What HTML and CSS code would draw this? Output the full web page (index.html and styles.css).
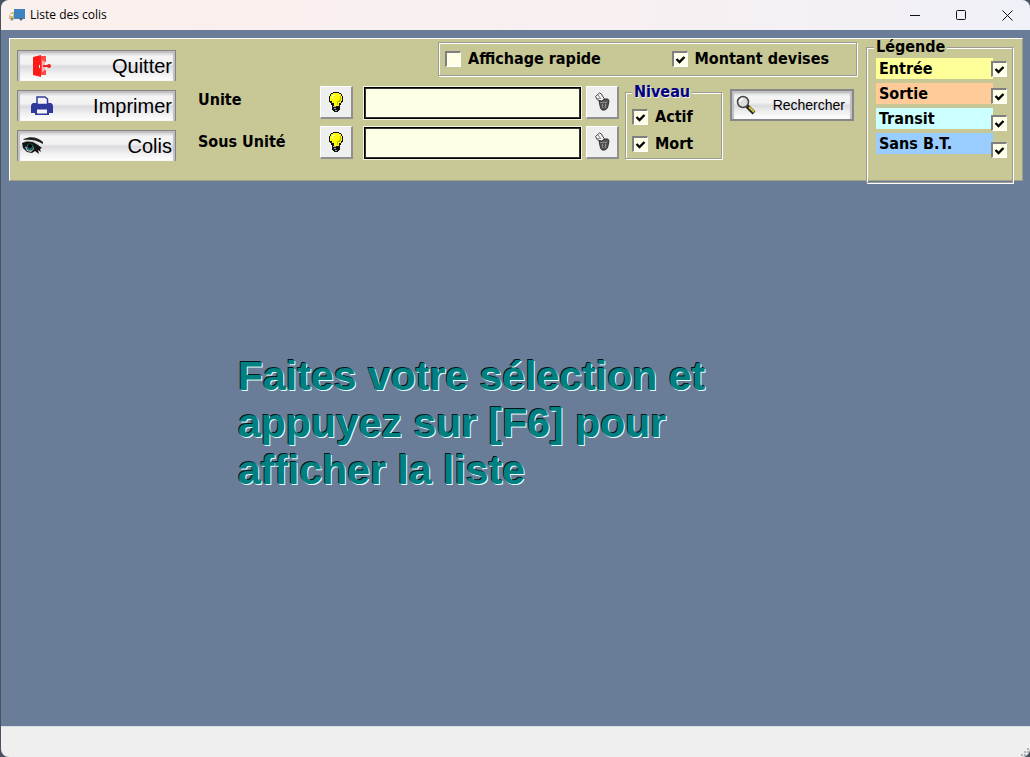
FILE: index.html
```html
<!DOCTYPE html>
<html lang="fr">
<head>
<meta charset="utf-8">
<title>Liste des colis</title>
<link rel="stylesheet" href="styles.css">
</head>
<body>
<svg class="sprites" aria-hidden="true">
  <symbol id="bulb" viewBox="0 0 16 22">
    <path d="M5 1h6v1h2v1h1v2h1v6h-1v1h-1v2h-1v5h-1v1h-1v1H6v-1H5v-1H4v-5H3v-2H2v-1H1V5h1V3h1V2h2z" fill="#111"/>
    <path d="M5 2h6v1h2v2h1v5h-1v2h-2v3H6v-3H4v-2H2V5h1V3h2z" fill="#ff0"/>
    <path d="M5 4h2v1H5v3H4V5h1z" fill="#fff"/>
    <path d="M12 5h1v5h-1v1h-2v3H9v-4h2V9h1z" fill="#b8b000"/>
    <path d="M5 15h3v1H5zM6 17h2v1H6zM7 19h2v1H7z" fill="#aaa"/>
  </symbol>
  <symbol id="trash" viewBox="0 0 16 20">
    <path d="M1.500 4.500l4-3.500 2 1 1 2 2 3-3 2-4-1z" fill="#f4f4f4" stroke="#444"/>
    <path d="M4 3l3 4M3 7l3-1" stroke="#888" fill="none"/>
    <path d="M5 8.500l3 1 3-2.500h3l1 2-1.500 7-2.500 2H8l-1.500-2z" fill="#555" stroke="#333"/>
    <path d="M6 10.500h7M8.500 12v4M11.500 12v4" stroke="#8c8c8c" fill="none"/>
  </symbol>
</svg>
<div class="window">
  <header class="titlebar">
    <svg class="app-icon" viewBox="0 0 16 14" aria-hidden="true">
      <path d="M5 1h11v10H5z" fill="#3f82bd"/>
      <path d="M1 6l2-2h2v7H0V8z" fill="#d8c07a"/><path d="M2 6h2v2H1z" fill="#eef4f8"/>
      <circle cx="3" cy="11" r="1.500" fill="#888"/><circle cx="12" cy="11" r="1.500" fill="#567"/>
    </svg>
    <h1 class="title">Liste des colis</h1>
    <button class="win-btn" aria-label="Réduire"><svg viewBox="0 0 11 11"><path d="M0 5.500h10"/></svg></button>
    <button class="win-btn" aria-label="Agrandir"><svg viewBox="0 0 11 11"><rect x=".5" y=".5" width="9" height="9" rx="1"/></svg></button>
    <button class="win-btn" aria-label="Fermer"><svg viewBox="0 0 11 11"><path d="M.5.5l10 10M10.500.5l-10 10"/></svg></button>
  </header>

  <main class="workspace">
    <form class="panel">
      <nav class="actions">
        <button type="button" class="action">
          <svg class="action-icon" viewBox="0 0 22 22" aria-hidden="true"><path d="M2 2l8-2v22l-8-2z" fill="#ff1a1a"/><path d="M10 1h5v6h-1v8h1v5h-5z" fill="#ff4a4a"/><path d="M11 5l3 2v8l-3 2z" fill="#ffb0b0"/><path d="M12 11h6" stroke="#e22" stroke-width="2"/><circle cx="18" cy="11" r="2" fill="#e22"/><path d="M8.500 10v3" stroke="#fff"/></svg>
          <span>Quitter</span>
        </button>
        <button type="button" class="action">
          <svg class="action-icon" viewBox="0 0 22 22" aria-hidden="true"><path d="M2 8h18q2 1 2 3v7h-4v2H4v-2H0v-7q0-2 2-3z" fill="#303a9c"/><path d="M6 9.500V2h8l2.500 2v5.500z" fill="#f4f4f8" stroke="#303a9c" stroke-width="1.500"/><path d="M6 14.500h10v4H6z" fill="#f4f4f8"/></svg>
          <span>Imprimer</span>
        </button>
        <button type="button" class="action action-flush">
          <svg class="action-icon" viewBox="0 0 22 22" aria-hidden="true"><path d="M2 4C8 1 16 2 21 7v2C15 5 8 4 1 5z" fill="#222"/><path d="M0 8l5-2 6 1 5 3 4 3-2 1 1 3-3-2 1 4-4-3-3 2-5-1-4-4z" fill="#151515"/><path d="M3 12l2 4 4 1 3-3-1-3z" fill="#c4cccc"/><circle cx="8" cy="12" r="3.500" fill="#1c5c60"/><circle cx="8" cy="11" r="2" fill="#000"/><path d="M2 7c4-2 10-1 15 3" stroke="#bbb" fill="none"/></svg>
          <span>Colis</span>
        </button>
      </nav>

      <section class="criteria">
        <div class="options etched">
          <label class="check"><input type="checkbox">Affichage rapide</label>
          <label class="check"><input type="checkbox" checked>Montant devises</label>
        </div>
        <div class="search-row">
          <div class="labels">
            <label for="unite">Unite</label>
            <label for="sous-unite">Sous Unité</label>
          </div>
          <div class="fields">
            <button type="button" class="tool" aria-label="Choisir l'unité"><svg class="bulb"><use href="#bulb"/></svg></button>
            <input class="field" id="unite" type="text">
            <button type="button" class="tool" aria-label="Effacer l'unité"><svg class="trash"><use href="#trash"/></svg></button>
            <button type="button" class="tool" aria-label="Choisir la sous-unité"><svg class="bulb"><use href="#bulb"/></svg></button>
            <input class="field" id="sous-unite" type="text">
            <button type="button" class="tool" aria-label="Effacer la sous-unité"><svg class="trash"><use href="#trash"/></svg></button>
          </div>
          <fieldset class="level etched">
            <legend>Niveau</legend>
            <label class="check"><input type="checkbox" checked>Actif</label>
            <label class="check"><input type="checkbox" checked>Mort</label>
          </fieldset>
          <button type="button" class="search">
            <svg viewBox="0 0 20 20" aria-hidden="true"><path d="M11 11l7 7" stroke="#222" stroke-width="4"/><path d="M13 12l5 5" stroke="#d4cc30" stroke-width="2"/><circle cx="7" cy="7" r="5.500" fill="#dcdcdc" stroke="#444" stroke-width="1.500"/><path d="M4 7c0-2 1-3 3-3" stroke="#fff" stroke-width="1.500" fill="none"/></svg>
            <span>Rechercher</span>
          </button>
        </div>
      </section>

      <fieldset class="key etched">
        <legend>Légende</legend>
        <div class="key-body">
          <div class="key-labels">
            <label class="entree" for="k1">Entrée</label>
            <label class="sortie" for="k2">Sortie</label>
            <label class="transit" for="k3">Transit</label>
            <label class="sans-bt" for="k4">Sans B.T.</label>
          </div>
          <div class="key-checks">
            <input type="checkbox" id="k1" checked>
            <input type="checkbox" id="k2" checked>
            <input type="checkbox" id="k3" checked>
            <input type="checkbox" id="k4" checked>
          </div>
        </div>
      </fieldset>
    </form>
    <p class="message">Faites votre sélection et appuyez sur [F6] pour afficher la liste</p>
  </main>
  <footer class="statusbar">
    <svg class="grip" viewBox="0 0 8 8" aria-hidden="true"><path d="M6 0h2v2H6zM3 3h2v2H3zM6 3h2v2H6zM0 6h2v2H0zM3 6h2v2H3zM6 6h2v2H6z" fill="#b4b4b4"/></svg>
  </footer>
</div>
</body>
</html>
```
FILE: styles.css
```css
* { box-sizing: border-box; }
html, body { height: 100%; }
body {
  margin: 0;
  padding-left: 1px;
  background: #4a5260;
  font: bold 16px/20px "DejaVu Sans Condensed", "Noto Sans", sans-serif;
  color: #000;
}
button { font: inherit; color: inherit; padding: 0; }
svg { display: block; }
.sprites { display: none; }

.window {
  display: flex;
  flex-direction: column;
  min-height: 100vh;
  overflow: hidden;
  border-radius: 8px;
  background: #697d99;
}

.titlebar {
  display: flex;
  align-items: center;
  height: 30px;
  padding-left: 8px;
  background: linear-gradient(90deg, #faf0ed, #f8f0f1 60%, #f0f1f8);
}
.app-icon { width: 16px; height: 14px; }
.title {
  flex: 1;
  margin: 0 0 0 5px;
  font: 12px/16px "Open Sans", "Noto Sans", sans-serif;
}
.win-btn {
  display: grid;
  place-items: center;
  width: 46px;
  height: 28px;
  border: 0;
  background: none;
}
.win-btn svg { width: 11px; height: 11px; fill: none; stroke: #111; }

.workspace { flex: 1; padding: 8px 7px 0 8px; }
.panel {
  display: flex;
  height: 143px;
  padding-right: 9px;
  background: #c8c896;
  border: 1px solid #a0a088;
  border-top-color: #fff;
  border-left-color: #fff;
}

.actions {
  display: flex;
  flex-direction: column;
  gap: 9px;
  width: 159px;
  margin: 11px 22px 0 7px;
}
.action, .search {
  display: flex;
  align-items: center;
  justify-content: space-between;
  border: 1px solid #848488;
  background: linear-gradient(#c4c4c6, #f4f4f5 18%, #f2f2f3 42%, #dcdce0 52%, #f0f0f1 75%, #fff);
  box-shadow: inset 2px 2px 1px #c0c0c4, inset -2px 0 1px #c0c0c4;
  font: 20px/24px "Liberation Sans", Arial, sans-serif;
}
.action { height: 31px; padding: 0 3px 0 13px; border-bottom: 0; }
.action-flush { padding-left: 4px; }
.action-icon { width: 22px; height: 22px; }

.criteria {
  display: flex;
  flex: 1;
  flex-direction: column;
  gap: 8px;
  min-width: 0;
  padding-top: 3px;
}
.etched {
  border: 1px solid #9c9c94;
  box-shadow: inset 1px 1px #fff, 1px 1px #fff;
}
.options {
  display: flex;
  align-self: flex-end;
  justify-content: space-between;
  width: 419px;
  height: 34px;
  padding: 0 27px 0 6px;
}
.check { display: flex; align-items: center; gap: 7px; white-space: nowrap; }

input[type="checkbox"] {
  appearance: none;
  width: 16px;
  height: 16px;
  margin: 0;
  border: 1px solid #fff;
  border-top: 2px solid #808080;
  border-left: 2px solid #808080;
  background: #ffffe8;
}
input[type="checkbox"]:checked {
  background: #ffffe8 url("data:image/svg+xml,%3Csvg xmlns='http://www.w3.org/2000/svg' viewBox='0 0 13 13'%3E%3Cpath d='M2.500 6l3 3 5-5' fill='none' stroke='%23000' stroke-width='2.400'/%3E%3C/svg%3E") center / 13px 13px no-repeat;
}

.search-row { display: flex; align-items: flex-start; }
.labels { display: flex; flex-direction: column; gap: 14px; width: 122px; padding-top: 2px; }
.labels label { line-height: 28px; }
.fields {
  display: grid;
  flex: 1;
  grid-template-columns: 33px 1fr 33px;
  align-items: center;
  gap: 7px 0;
  padding-top: 2px;
}
.tool {
  display: grid;
  place-items: center;
  height: 33px;
  border: 1px solid #fff;
  border-right: 2px solid #909090;
  border-bottom: 2px solid #909090;
  background: #efefef;
}
.bulb { width: 16px; height: 22px; }
.trash { width: 16px; height: 20px; }
.field {
  min-width: 0;
  height: 32px;
  margin: 0 5px 0 11px;
  padding: 0 6px;
  border: 1px solid #000;
  outline: 1px solid #f4f4e0;
  background: #ffffe8;
  box-shadow: inset 0 0 0 1px #333;
  font: inherit;
}

.level {
  display: flex;
  flex-direction: column;
  gap: 7px;
  width: 97px;
  height: 75px;
  margin: 0 8px 0 6px;
  padding: 7px 0 0 6px;
}
legend { padding: 0 2px; line-height: 16px; background: #c8c896; }
.level legend { color: #000080; text-shadow: 1px 1px #eee; }
.search {
  width: 124px;
  height: 32px;
  margin: 5px 3px 0 0;
  padding: 0 7px 0 4px;
  border: 2px solid #88888c;
  font-size: 14px;
}
.search svg { width: 20px; height: 20px; }

.key {
  width: 147px;
  height: 144px;
  margin: 0 0 0 9px;
  padding: 0 5px 0 9px;
}
.key legend { margin-left: -2px; }
.key-body { display: flex; align-items: flex-start; padding-top: 3px; }
.key-labels { display: flex; flex: 1; flex-direction: column; gap: 4px; }
.key-labels label { padding-left: 3px; line-height: 21px; }
.key-checks { display: flex; flex-direction: column; gap: 11px; margin: 3px 0 0 -2px; }
.entree { background: #ffff99; }
.sortie { background: #ffcc99; }
.transit { background: #ccffff; }
.sans-bt { background: #99ccff; }

.message {
  max-width: 490px;
  margin: 172px 0 0 229px;
  font: bold 41px/47px "Liberation Sans", Arial, sans-serif;
  color: #008080;
  text-shadow: 1px 1px #e8ffff, -1px -1px #001818;
}

.statusbar {
  display: flex;
  align-items: flex-end;
  justify-content: flex-end;
  height: 31px;
  padding: 0 1px 1px 0;
  border-top: 1px solid #d8e0e4;
  background: #efefef;
}
.grip { width: 8px; height: 8px; }
```
